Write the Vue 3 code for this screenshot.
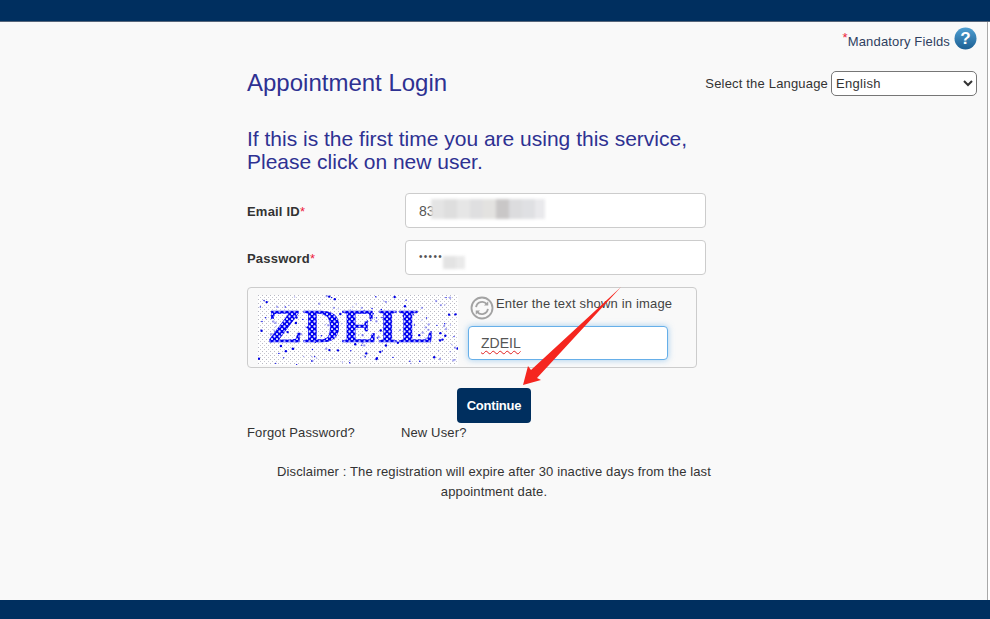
<script setup>
// captcha noise dots, fixed formula so the picture stays the same
const rand = (i, k) => {
  const v = Math.sin(i * 12.9898 + k * 78.233) * 43758.5453
  return v - Math.floor(v)
}
const specks = Array.from({ length: 180 }, (_, i) => ({
  x: rand(i, 1) * 200,
  y: rand(i, 2) * 70,
  r: rand(i, 3) > 0.6 ? 1.2 : 0.7,
  o: rand(i, 4) > 0.5 ? 1 : 0.35,
}))
const blurEmail = [
  { w: 13, c: '#e4e4e4' }, { w: 13, c: '#dedede' }, { w: 13, c: '#e6e6e6' }, { w: 13, c: '#dfdfe0' },
  { w: 13, c: '#e3e2e0' }, { w: 13, c: '#c9c7c7' }, { w: 13, c: '#dcdcde' }, { w: 13, c: '#dfe0e3' },
  { w: 10, c: '#e9e9ec' },
]
</script>

<template>
  <div class="page">
    <header class="top-bar"></header>
    <main class="content">
      <div class="mandatory">
        <span class="star sup">*</span><span>Mandatory Fields</span>
        <svg class="help" width="23" height="23" viewBox="0 0 23 23">
          <defs>
            <linearGradient id="helpBg" x1="0" y1="0" x2="0" y2="1">
              <stop offset="0" stop-color="#4f9fd2" />
              <stop offset="1" stop-color="#1c5f93" />
            </linearGradient>
          </defs>
          <circle cx="11.5" cy="11.5" r="11" fill="url(#helpBg)" />
          <text x="11.5" y="17" text-anchor="middle" class="help-mark">?</text>
        </svg>
      </div>

      <div class="form-wrap">
        <div class="title-row">
          <h1>Appointment Login</h1>
          <div class="lang">
            <label>Select the Language</label>
            <select class="lang-select">
              <option>English</option>
            </select>
          </div>
        </div>

        <h2>If this is the first time you are using this service,<br />Please click on new user.</h2>

        <div class="field-row">
          <label>Email ID<span class="star">*</span></label>
          <div class="input">
            <span>83</span>
            <div class="smudge">
              <i v-for="(b, i) in blurEmail" :key="i" :style="{ width: b.w + 'px', background: b.c }"></i>
            </div>
          </div>
        </div>
        <div class="field-row">
          <label>Password<span class="star">*</span></label>
          <div class="input">
            <span class="dots">•••••</span>
            <div class="smudge small"><i></i><i></i></div>
          </div>
        </div>

        <div class="captcha-box">
          <svg class="captcha" width="200" height="70" viewBox="0 0 200 70">
            <defs>
              <pattern id="paper" width="4" height="4" patternUnits="userSpaceOnUse">
                <rect width="4" height="4" fill="#fff" />
                <rect width="1" height="1" fill="#b9b9c4" />
                <rect x="2" y="2" width="1" height="1" fill="#c8c8d0" />
              </pattern>
              <pattern id="mesh" width="5" height="5" patternUnits="userSpaceOnUse">
                <rect width="5" height="5" fill="#0000f0" />
                <circle cx="1.5" cy="1.5" r="1.15" fill="#e6e9ff" />
                <circle cx="4" cy="4" r="1.05" fill="#e6e9ff" />
              </pattern>
            </defs>
            <rect width="200" height="70" fill="url(#paper)" />
            <circle v-for="(s, i) in specks" :key="i" :cx="s.x" :cy="s.y" :r="s.r" fill="#0000e6" :opacity="s.o" />
            <text x="9" y="47" class="captcha-text" textLength="167" lengthAdjust="spacingAndGlyphs">ZDEIL</text>
          </svg>
          <div class="captcha-side">
            <div class="captcha-hint">
              <svg class="refresh" width="24" height="24" viewBox="0 0 26 26" fill="none" stroke="#a3a3a3">
                <circle cx="13" cy="13" r="11.4" stroke-width="2" />
                <path d="M6.6 12a6.6 6.6 0 0 1 11.6-3.2" stroke-width="2" />
                <path d="M19.4 14a6.6 6.6 0 0 1-11.6 3.2" stroke-width="2" />
                <path d="M19.8 5.6v4.6h-4.6z" fill="#a3a3a3" stroke="none" />
                <path d="M6.2 20.4v-4.6h4.6z" fill="#a3a3a3" stroke="none" />
              </svg>
              <span>Enter the text shown in image</span>
            </div>
            <div class="captcha-input"><span class="typed">ZDEIL</span></div>
          </div>
        </div>

        <div class="actions">
          <button class="continue">Continue</button>
        </div>
        <div class="links">
          <a>Forgot Password?</a>
          <a>New User?</a>
        </div>
        <p class="disclaimer">Disclaimer : The registration will expire after 30 inactive days from the last appointment date.</p>
      </div>

      <!-- red annotation arrow drawn over the form -->
      <svg class="arrow" width="104" height="100" viewBox="0 0 104 100">
        <path d="M101 0 L17 91 L21 93 L3 98 L8 79 L11 83 Z" fill="#f5261f" />
      </svg>
    </main>
    <footer class="bottom-bar"></footer>
  </div>
</template>

<style scoped>
.page {
  width: 990px;
  height: 619px;
  display: flex;
  flex-direction: column;
  overflow: hidden;
  background: #fff;
  font-family: "Liberation Sans", Arial, sans-serif;
  font-size: 13px;
  color: #333;
}
.top-bar {
  height: 21px;
  flex: none;
  background: #002f5f;
  border-bottom: 1px solid #56657a;
  box-sizing: content-box;
}
.bottom-bar {
  height: 19px;
  flex: none;
  background: #002f5f;
}
.content {
  flex: 1;
  position: relative;
  margin-right: 2px;
  padding-top: 5px;
  background: #f9f9f9;
  border-right: 1px solid #a9a9a9;
}
.mandatory {
  height: 23px;
  display: flex;
  align-items: center;
  justify-content: flex-end;
  padding-right: 10px;
  color: #2f3f5f;
  letter-spacing: 0.16px;
}
.mandatory > span:nth-child(2) {
  margin-top: 6px;
}
.star {
  color: #ed1c3c;
}
.sup {
  margin-top: -3px;
}
.help {
  margin-left: 4px;
}
.help-mark {
  font-size: 17px;
  font-weight: bold;
  fill: #fff;
  font-family: "Liberation Sans", Arial, sans-serif;
}
.form-wrap {
  margin-left: 247px;
  width: 730px;
}
.title-row {
  display: flex;
  justify-content: space-between;
  align-items: center;
  margin-top: 15px;
  height: 36px;
}
h1 {
  margin: 0;
  font-size: 24px;
  font-weight: normal;
  color: #2e3192;
}
.lang {
  display: flex;
  align-items: center;
  gap: 3px;
  letter-spacing: 0.18px;
}
.lang-select {
  width: 146px;
  height: 25px;
  padding: 0;
  border: 1px solid #767676;
  border-radius: 5px;
  background-color: #fff;
  font-family: inherit;
  font-size: 13px;
  color: #333;
  letter-spacing: 0.3px;
}
h2 {
  margin: 26px 0 0;
  font-size: 21px;
  line-height: 23px;
  font-weight: normal;
  color: #2e3192;
}
.field-row {
  display: flex;
  align-items: center;
  width: 459px;
  height: 35px;
  margin-top: 12px;
  justify-content: space-between;
}
h2 + .field-row {
  margin-top: 20px;
}
.field-row label {
  font-weight: bold;
  color: #333;
  letter-spacing: 0.2px;
  margin-top: 1px;
}
.field-row .star {
  font-weight: normal;
}
.input {
  width: 301px;
  height: 35px;
  box-sizing: border-box;
  position: relative;
  display: flex;
  align-items: center;
  padding-left: 13px;
  background: #fff;
  border: 1px solid #ccc;
  border-radius: 4px;
  font-size: 14px;
  color: #555;
}
.smudge {
  position: absolute;
  left: 25px;
  top: 5px;
  height: 20px;
  display: flex;
  filter: blur(1.5px);
}
.smudge.small {
  left: 37px;
  top: 15px;
  height: 13px;
}
.smudge.small i {
  width: 13px;
  background: #e3e3e3;
}
.smudge.small i + i {
  background: #eaeaea;
  width: 9px;
}
.dots {
  font-size: 10px;
  letter-spacing: 1.3px;
  margin-bottom: 2px;
}
.captcha-box {
  width: 450px;
  height: 81px;
  box-sizing: border-box;
  margin-top: 12px;
  padding: 7px 10px 0;
  display: flex;
  gap: 10px;
  border: 1px solid #ccc;
  border-radius: 4px;
}
.captcha {
  flex: none;
}
.captcha-text {
  font-family: "Liberation Serif", serif;
  font-size: 47px;
  font-weight: bold;
  fill: url(#mesh);
  stroke: #0000f0;
  stroke-width: 0.4px;
}
.captcha-side {
  width: 200px;
}
.captcha-hint {
  display: flex;
  align-items: flex-start;
  height: 31px;
  letter-spacing: 0.17px;
  color: #444;
  white-space: nowrap;
}
.captcha-hint span {
  line-height: 16px;
  margin-left: 2px;
  margin-top: 1px;
}
.refresh {
  flex: none;
  margin-top: 1px;
  margin-left: 2px;
}
.captcha-input {
  width: 200px;
  height: 34px;
  box-sizing: border-box;
  padding-left: 12px;
  display: flex;
  align-items: center;
  background: #fff;
  border: 1px solid #66afe9;
  border-radius: 4px;
  box-shadow: 0 0 6px rgba(102, 175, 233, 0.6);
  font-size: 14px;
  color: #555;
}
.typed {
  text-decoration: underline wavy #e02020 1px;
  text-underline-offset: 2px;
}
.actions {
  width: 494px;
  display: flex;
  justify-content: center;
  margin-top: 20px;
}
.continue {
  width: 74px;
  height: 35px;
  padding: 0;
  border: none;
  border-radius: 4px;
  background: #002f5f;
  color: #fff;
  font-family: inherit;
  font-size: 13px;
  font-weight: bold;
  letter-spacing: -0.2px;
}
.links {
  display: flex;
  gap: 46px;
  height: 20px;
  line-height: 20px;
  letter-spacing: 0.15px;
}
.disclaimer {
  width: 494px;
  margin: 19px 0 0;
  text-align: center;
  line-height: 20px;
  letter-spacing: 0.13px;
}
.arrow {
  position: absolute;
  left: 520px;
  top: 265px;
}
</style>

<style>
html, body {
  margin: 0;
  background: #fff;
}
</style>
